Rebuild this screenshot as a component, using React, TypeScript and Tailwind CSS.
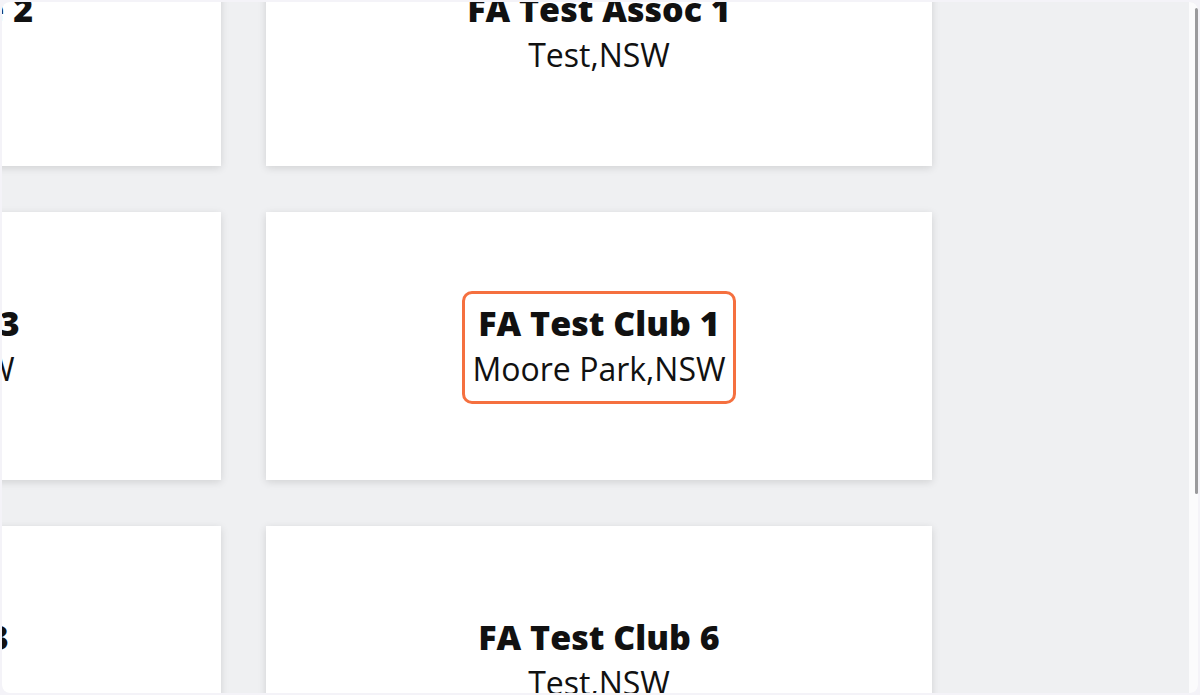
const cards = [
  { title: "FA Test League 2", place: "Test,NSW" },
  { title: "FA Test Assoc 1", place: "Test,NSW" },
  { title: "FA Test Assoc 3", place: "Moore Park,NSW" },
  { title: "FA Test Club 1", place: "Moore Park,NSW", active: true },
  { title: "FA Test Club 3", place: "Test,NSW" },
  { title: "FA Test Club 6", place: "Test,NSW" },
];

function ClubText({ title, place }: { title: string; place: string }) {
  return (
    <>
      <p className="text-[34px] font-extrabold leading-[46px] text-[#111]">{title}</p>
      <p className="text-[32px] font-normal leading-[46px] text-[#111]">{place}</p>
    </>
  );
}

export default function App() {
  return (
    <div
      className="h-[695px] w-[1200px] bg-[#f4f3f8] p-[2px]"
      style={{ fontFamily: "'Open Sans', 'Noto Sans', sans-serif" }}
    >
      <div className="relative h-full overflow-hidden rounded-[8px] bg-[#eff0f2]">
        <div className="-ml-[447px] -mt-[104px] grid grid-cols-[666px_666px] auto-rows-[268px] gap-x-[45px] gap-y-[46px]">
          {cards.map((card) => (
            <div
              key={card.title}
              className="flex flex-col items-center justify-center whitespace-nowrap bg-white text-center shadow-[0_2px_8px_rgba(0,0,0,0.13)]"
            >
              {card.active ? (
                <div className="mt-[2px] rounded-[10px] border-[3px] border-[#f5703f] px-[7px] pb-[9px] pt-[6px]">
                  <ClubText title={card.title} place={card.place} />
                </div>
              ) : (
                <ClubText title={card.title} place={card.place} />
              )}
            </div>
          ))}
        </div>

        {/* scrollbar */}
        <div className="absolute right-0 top-0 flex h-full w-[9px] justify-end rounded-tr-[8px] bg-[#fbfbfc]">
          <div className="mt-[6px] h-[486px] w-[3px] rounded-full bg-[#9a9a9c]" />
        </div>
      </div>
    </div>
  );
}
